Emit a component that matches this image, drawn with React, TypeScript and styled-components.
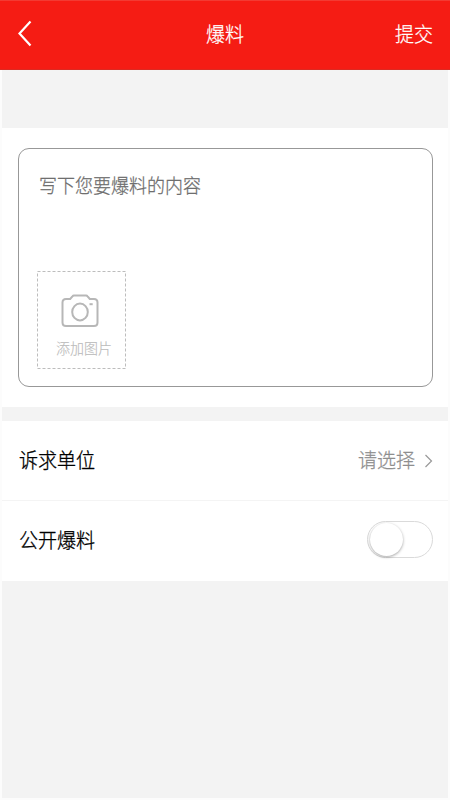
import React, { useState } from "react";
import styled, { createGlobalStyle } from "styled-components";

const GlobalStyle = createGlobalStyle`
  * { box-sizing: border-box; }
  body { margin: 0; background: #fcfcfc; }
  button { border: 0; padding: 0; background: none; font: inherit; color: inherit; cursor: pointer; }
`;

const Screen = styled.div`
  width: 450px;
  height: 800px;
  display: flex;
  flex-direction: column;
  overflow: hidden;
  font-family: "Noto Sans CJK SC", sans-serif;
  font-weight: 400;
`;

const Header = styled.header`
  height: 70px;
  flex: none;
  display: grid;
  grid-template-columns: 1fr auto 1fr;
  align-items: center;
  padding: 0 17px 2px 17px;
  color: #fff;
  background: #f51c14;
  border-top: 1px solid #f33a32;
  border-bottom: 1px solid #dc2a22;
`;

const Label = styled.span<{ $size?: number; $color?: string; $stroke?: number; $shift?: number }>`
  display: inline-block;
  font-size: ${(p) => p.$size ?? 19}px;
  line-height: 28px;
  color: ${(p) => p.$color ?? "inherit"};
  font-weight: 300;
  -webkit-text-stroke: ${(p) => p.$stroke ?? 0.25}px currentColor;
  white-space: nowrap;
  transform: translateY(${(p) => p.$shift ?? -0.5}px) scaleY(1.08);
`;

const BackButton = styled.button`
  justify-self: start;
  display: flex;
`;

const SubmitButton = styled.button`
  justify-self: end;
`;

const Body = styled.main`
  flex: 1;
  margin: 0 2px 2px;
  background: #f3f3f3;
`;

const Editor = styled.section`
  height: 279px;
  margin-top: 58px;
  padding: 20px 15px 20px 16px;
  background: #fff;
`;

const Field = styled.div`
  height: 239px;
  border: 1px solid #989898;
  border-radius: 11px;
  padding: 22px 18px 0;
  display: flex;
  flex-direction: column;
  align-items: flex-start;
`;

const Placeholder = styled.div`
  height: 100px;
  padding-left: 2px;
`;

const Upload = styled.button`
  width: 90px;
  height: 98px;
`;

const UploadFrame = styled.span`
  position: relative;
  display: flex;
  flex-direction: column;
  align-items: center;
  width: 90px;
  height: 98px;
  padding: 23px 0 0 4px;
`;

const DashedOutline = styled.svg`
  position: absolute;
  inset: 0;
`;

const CameraIcon = styled.svg`
  display: block;
  margin: 0 8px 4px 0;
`;

const Row = styled.div<{ $gap?: number; $divider?: boolean }>`
  height: ${(p) => (p.$divider ? 81 : 79)}px;
  margin-top: ${(p) => p.$gap ?? 0}px;
  padding: 0 15px 3px 17px;
  display: flex;
  align-items: center;
  justify-content: space-between;
  background: #fff;
  border-top: ${(p) => (p.$divider ? "1px solid #f4f4f4" : "0")};
`;

const Choice = styled.button`
  display: flex;
  align-items: center;
  gap: 9px;
`;

const Chevron = styled.svg`
  margin-top: 3px;
`;

const Switch = styled.button<{ $on: boolean }>`
  width: 66px;
  height: 37px;
  border: 1px solid #dadada;
  border-radius: 19px;
  padding: 1px 2px;
  display: flex;
  justify-content: ${(p) => (p.$on ? "flex-end" : "flex-start")};
  background: ${(p) => (p.$on ? "#f51c14" : "#fff")};
`;

const Thumb = styled.span`
  width: 33px;
  height: 33px;
  border-radius: 50%;
  background: #fff;
  box-shadow: 0 1px 3px rgba(0, 0, 0, 0.36);
`;

export default function App() {
  const [open, setOpen] = useState(false);
  return (
    <>
      <GlobalStyle />
      <Screen>
        <Header>
          <BackButton aria-label="返回">
            <svg width="16" height="28" viewBox="0 0 16 28" fill="none" stroke="#fff" strokeWidth="2.2">
              <path d="M13.5 1.5 2.5 13.5l11 12" />
            </svg>
          </BackButton>
          <Label>爆料</Label>
          <SubmitButton><Label>提交</Label></SubmitButton>
        </Header>
        <Body>
          <Editor>
            <Field>
              <Placeholder>
                <Label $size={18} $color="#6e6e6e" $shift={-1}>写下您要爆料的内容</Label>
              </Placeholder>
              <Upload>
                <UploadFrame>
                  <DashedOutline width="90" height="98" fill="none" stroke="#bdbdbd" strokeDasharray="3 2">
                    <rect x="0.5" y="0.5" width="88" height="97" />
                  </DashedOutline>
                  <CameraIcon width="38" height="34" viewBox="0 0 38 34" fill="none" stroke="#b7b7b7" strokeWidth="2">
                    <path d="M5 5h4.2l2.2-2.7Q12 1.5 13 1.5h12q1 0 1.6.8l2.2 2.7H33q3.5 0 3.5 3.5v20q0 3.5-3.5 3.5H5q-3.5 0-3.5-3.5V8.500Q1.5 5 5 5Z" />
                    <ellipse cx="19" cy="18" rx="7.8" ry="8.4" />
                    <path d="M28.5 10.2h3.2" />
                  </CameraIcon>
                  <Label $size={14} $color="#bbbbbb" $stroke={0.15} $shift={1.5}>添加图片</Label>
                </UploadFrame>
              </Upload>
            </Field>
          </Editor>
          <Row $gap={14}>
            <Label $color="#000" $stroke={0.3} $shift={0.5}>诉求单位</Label>
            <Choice>
              <Label $color="#8e8e8e" $shift={0.5}>请选择</Label>
              <Chevron width="9" height="14" viewBox="0 0 9 14" fill="none" stroke="#999" strokeWidth="1.2">
                <path d="m1.5 1 6 6-6 6" />
              </Chevron>
            </Choice>
          </Row>
          <Row $divider>
            <Label $color="#000" $stroke={0.3} $shift={-0.5}>公开爆料</Label>
            <Switch
              role="switch"
              aria-label="公开爆料"
              aria-checked={open}
              $on={open}
              onClick={() => setOpen(!open)}
            >
              <Thumb />
            </Switch>
          </Row>
        </Body>
      </Screen>
    </>
  );
}
